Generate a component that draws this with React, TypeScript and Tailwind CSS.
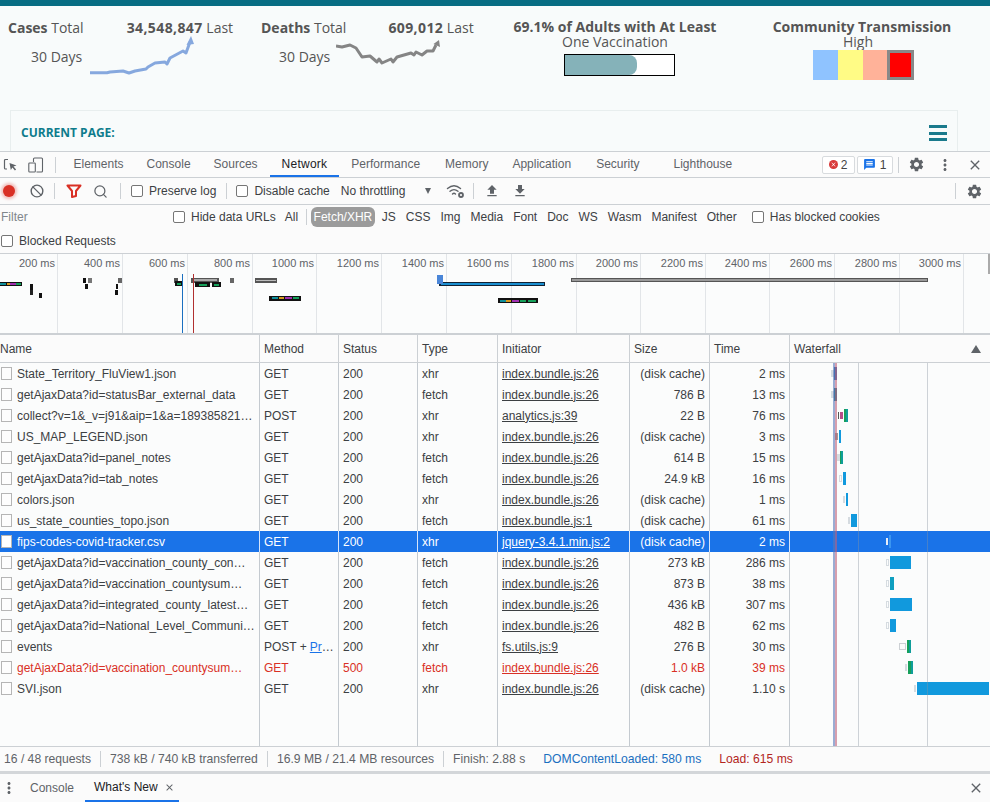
import { Ban, Search } from 'lucide-react';
import { MdClose, MdFileDownload, MdFileUpload, MdMessage, MdMoreVert, MdSettings } from 'react-icons/md';

interface Req {
  name: string;
  method: string;
  status: string;
  type: string;
  initiator: string;
  size: string;
  time: string;
  bars: Bar[];
}

// x0, x1 in page pixels, colour, kind of bar
type Bar = [number, number, string, 'main' | 'light' | 'box'];

const BLUE = '#1199dd';
const TEAL = '#0f9d9a';
const GREEN = '#16a05a';
const LIGHT = '#d5dbe0';

const requests: Req[] = [
  { name: 'State_Territory_FluView1.json', method: 'GET', status: '200', type: 'xhr', initiator: 'index.bundle.js:26', size: '(disk cache)', time: '2 ms', bars: [[831, 834, LIGHT, 'light'], [834, 837, '#2b6cb0', 'main']] },
  { name: 'getAjaxData?id=statusBar_external_data', method: 'GET', status: '200', type: 'fetch', initiator: 'index.bundle.js:26', size: '786 B', time: '13 ms', bars: [[831, 834, LIGHT, 'light'], [834, 837, '#1f7a8c', 'main']] },
  { name: 'collect?v=1&_v=j91&aip=1&a=189385821…', method: 'POST', status: '200', type: 'xhr', initiator: 'analytics.js:39', size: '22 B', time: '76 ms', bars: [[838, 839, '#555', 'light'], [840, 843, '#b54d88', 'light'], [844, 846, GREEN, 'main'], [846, 848, TEAL, 'main']] },
  { name: 'US_MAP_LEGEND.json', method: 'GET', status: '200', type: 'xhr', initiator: 'index.bundle.js:26', size: '(disk cache)', time: '3 ms', bars: [[835, 838, '#9a9a9a', 'light'], [839, 841, BLUE, 'main']] },
  { name: 'getAjaxData?id=panel_notes', method: 'GET', status: '200', type: 'fetch', initiator: 'index.bundle.js:26', size: '614 B', time: '15 ms', bars: [[837, 840, LIGHT, 'light'], [840, 841, GREEN, 'main'], [841, 843, TEAL, 'main']] },
  { name: 'getAjaxData?id=tab_notes', method: 'GET', status: '200', type: 'fetch', initiator: 'index.bundle.js:26', size: '24.9 kB', time: '16 ms', bars: [[839, 842, LIGHT, 'box'], [843, 846, BLUE, 'main']] },
  { name: 'colors.json', method: 'GET', status: '200', type: 'xhr', initiator: 'index.bundle.js:26', size: '(disk cache)', time: '1 ms', bars: [[843, 845, LIGHT, 'light'], [846, 848, BLUE, 'main']] },
  { name: 'us_state_counties_topo.json', method: 'GET', status: '200', type: 'fetch', initiator: 'index.bundle.js:1', size: '(disk cache)', time: '61 ms', bars: [[848, 850, LIGHT, 'light'], [851, 857, BLUE, 'main']] },
  { name: 'fips-codes-covid-tracker.csv', method: 'GET', status: '200', type: 'xhr', initiator: 'jquery-3.4.1.min.js:2', size: '(disk cache)', time: '2 ms', bars: [[886, 888, '#e8eef8', 'light'], [889, 891, '#3b95f0', 'main']] },
  { name: 'getAjaxData?id=vaccination_county_con…', method: 'GET', status: '200', type: 'fetch', initiator: 'index.bundle.js:26', size: '273 kB', time: '286 ms', bars: [[886, 889, LIGHT, 'box'], [890, 911, BLUE, 'main']] },
  { name: 'getAjaxData?id=vaccination_countysum…', method: 'GET', status: '200', type: 'fetch', initiator: 'index.bundle.js:26', size: '873 B', time: '38 ms', bars: [[886, 889, LIGHT, 'box'], [890, 894, '#0f9fc0', 'main']] },
  { name: 'getAjaxData?id=integrated_county_latest…', method: 'GET', status: '200', type: 'fetch', initiator: 'index.bundle.js:26', size: '436 kB', time: '307 ms', bars: [[886, 889, LIGHT, 'box'], [890, 912, BLUE, 'main']] },
  { name: 'getAjaxData?id=National_Level_Communi…', method: 'GET', status: '200', type: 'fetch', initiator: 'index.bundle.js:26', size: '482 B', time: '62 ms', bars: [[886, 889, LIGHT, 'box'], [890, 896, BLUE, 'main']] },
  { name: 'events', method: 'POST', status: '200', type: 'xhr', initiator: 'fs.utils.js:9', size: '276 B', time: '30 ms', bars: [[899, 906, '#ccd0d4', 'box'], [907, 909, GREEN, 'main'], [909, 911, TEAL, 'main']] },
  { name: 'getAjaxData?id=vaccination_countysum…', method: 'GET', status: '500', type: 'fetch', initiator: 'index.bundle.js:26', size: '1.0 kB', time: '39 ms', bars: [[905, 907, LIGHT, 'light'], [908, 911, GREEN, 'main'], [911, 913, TEAL, 'main']] },
  { name: 'SVI.json', method: 'GET', status: '200', type: 'xhr', initiator: 'index.bundle.js:26', size: '(disk cache)', time: '1.10 s', bars: [[914, 916, LIGHT, 'light'], [917, 989, BLUE, 'main']] },
];

const gridCols = 'grid grid-cols-[260px_79px_79px_80px_132px_80px_80px_200px]';
const rulerLabels = [200, 400, 600, 800, 1000, 1200, 1400, 1600, 1800, 2000, 2200, 2400, 2600, 2800, 3000];
const rulerLines = [57, 122, 187, 252, 316, 381, 446, 511, 576, 640, 705, 769, 834, 899, 963];
const filterTypes = ['JS', 'CSS', 'Img', 'Media', 'Font', 'Doc', 'WS', 'Wasm', 'Manifest', 'Other'];

// x, y, width, height, colour: marks on the overview strip
const marks: [number, number, number, number, string][] = [
  [0, 282, 22, 4, '#111'], [0, 283, 6, 2, '#0f8f9a'], [7, 283, 3, 2, '#d69a20'], [10, 283, 6, 2, '#a030b0'], [16, 283, 5, 2, '#16a05a'],
  [30, 284, 3, 6, '#111'], [30, 290, 3, 5, '#222'], [39, 293, 3, 5, '#111'],
  [83, 278, 3, 5, '#111'], [88, 278, 4, 5, '#777'], [85, 284, 3, 5, '#111'],
  [118, 278, 4, 5, '#666'], [116, 284, 2, 5, '#111'], [115, 290, 3, 5, '#111'],
  [174, 278, 4, 5, '#555'], [175, 281, 7, 5, '#111'], [177, 283, 4, 2, '#16a05a'],
  [191, 278, 28, 5, '#555'], [193, 279, 24, 2, '#aaa'], [195, 282, 15, 5, '#111'], [199, 284, 8, 2, '#16a05a'], [212, 282, 9, 5, '#111'], [214, 284, 5, 2, '#16a05a'],
  [230, 278, 4, 5, '#666'],
  [255, 278, 22, 5, '#555'], [256, 280, 20, 1, '#bbb'],
  [269, 296, 32, 5, '#111'], [272, 297, 6, 2, '#0f8f9a'], [279, 297, 5, 2, '#d69a20'], [285, 297, 7, 2, '#a030b0'], [293, 297, 6, 2, '#16a05a'],
  [439, 282, 106, 4, '#123'], [441, 283, 103, 2, '#1a8fd0'], [437, 275, 6, 9, '#4a86d8'],
  [498, 298, 40, 5, '#111'], [500, 300, 6, 2, '#0f8f9a'], [506, 300, 5, 2, '#d69a20'], [512, 300, 7, 2, '#a030b0'], [520, 300, 6, 2, '#16a05a'], [528, 300, 8, 2, '#16a05a'],
  [571, 278, 357, 4, '#555'], [572, 279, 355, 2, '#999'],
];

function Checkbox() {
  return <span className="block w-[12px] h-[12px] shrink-0 rounded-[2px] border border-[#767676] bg-white" />;
}

function Sep({ h = 'h-[16px]' }: { h?: string }) {
  return <span className={`block w-px ${h} bg-[#ccd0d4] shrink-0`} />;
}

function Stat({ label, total, points, head, viewBox, color, width, left, gap }: { label: string; total: string; points: string; head: string; viewBox: string; color: string; width: string; left: string; gap: string }) {
  return (
    <div className={`${width} pl-[8px] shrink-0`}>
      <div className="flex h-[20px] items-center">
        <span><b className="font-bold">{label}</b> Total</span>
        <span className={gap}><b className="font-bold tracking-[0.4px]">{total}</b> Last</span>
      </div>
      <div className={`flex ${left}`}>
        <span className="mt-[10px] leading-[20px]">30 Days</span>
        <svg width="108" height="44" viewBox={viewBox} className="-mt-[5px] ml-[6px]" fill="none">
          <polyline points={points} stroke={color} strokeWidth="3" strokeLinejoin="round" />
          <polygon points={head} fill={color} />
        </svg>
      </div>
    </div>
  );
}

function Tab({ label, active, className }: { label: string; active?: boolean; className?: string }) {
  return (
    <div className={`h-full flex items-center px-[11.5px] border-b-2 ${active ? 'border-[#1a73e8] text-[#202124]' : 'border-transparent text-[#5f6368]'} ${className ?? ''}`}>
      {label}
    </div>
  );
}

function InspectIcon() {
  return (
    <svg width="16" height="16" viewBox="0 0 16 16" fill="none" stroke="#5f6368" strokeWidth="1.2">
      <path d="M6 2.5H3.5a1 1 0 0 0-1 1V11a1 1 0 0 0 1 1H5" />
      <path d="M7.5 6l7 2.6-3 1 2.6 3-1.2 1-2.5-3-1.6 2.4z" fill="#5f6368" stroke="none" />
    </svg>
  );
}

function DeviceIcon() {
  return (
    <svg width="16" height="16" viewBox="0 0 16 16" fill="none" stroke="#5f6368" strokeWidth="1.1">
      <path d="M5.5 5V2a1 1 0 0 1 1-1h7a1 1 0 0 1 1 1v12a1 1 0 0 1-1 1H8.5" />
      <rect x="0.8" y="6" width="6.5" height="9" rx="0.8" />
    </svg>
  );
}

function WifiGear() {
  return (
    <svg width="20" height="16" viewBox="0 0 20 16" fill="none" stroke="#5f6368" strokeWidth="1.4" strokeLinecap="round">
      <path d="M1.5 5.5c4-3.4 9-3.4 13 0" />
      <path d="M4 8.3c2.600-2.200 5.400-2.200 8 0" />
      <path d="M6.500 11c1-.9 2-.9 3 0" />
      <circle cx="15" cy="12" r="2" strokeWidth="1.800" />
    </svg>
  );
}

function Waterfall({ bars }: { bars: Bar[] }) {
  return (
    <>
      {bars.map(([x0, x1, color, kind], i) => {
        const h = kind === 'main' ? 13 : 7;
        return (
          <span
            key={i}
            className="absolute"
            style={{
              left: x0 - 790,
              width: x1 - x0,
              height: h,
              top: (21 - h) / 2,
              background: kind === 'box' ? 'transparent' : color,
              border: kind === 'box' ? `1px solid ${color}` : undefined,
            }}
          />
        );
      })}
    </>
  );
}

export default function App() {
  return (
    <div className="w-[990px] h-[802px] overflow-hidden flex flex-col bg-[#fbfcfc] text-[12px] text-[#3c4043] font-['Liberation_Sans',Arial,sans-serif]">
      {/* page under the devtools */}
      <div className="h-[151px] shrink-0 overflow-hidden bg-[#f8fbfb] font-['Open_Sans',sans-serif] text-[14px] text-[#555]">
        <div className="h-[6px] bg-[#076d83]" />
        <div className="flex pt-[11px] h-[104px]">
          <Stat
            label="Cases"
            total="34,548,847"
            width="w-[253px]"
            left="pl-[23px]"
            gap="ml-[43px]"
            color="#86a8de"
            viewBox="88 32 108 44"
            points="90,72.700 107,72.700 110,72 123,71 129,73 135,71 146,69 148,67 155,63 165,62 167,64 170,58 183,51 186,53 190,42"
            head="191,36 186.500,45 194,44"
          />
          <Stat
            label="Deaths"
            total="609,012"
            width="w-[247px]"
            left="pl-[18px]"
            gap="ml-[42px]"
            color="#858585"
            viewBox="337 32 108 44"
            points="337,46 343,47 351,45 357,48 363,57 371,56 378,62 380,59 383,63 392,59 394,62 398,57 412,53 415,55 417,52 423,55 428,51 434,51 437,45"
            head="440,40 434.500,44 441,47"
          />
          <div className="w-[230px] shrink-0 text-center">
            <div className="font-bold text-[#555] leading-[18px] mt-px">69.1% of Adults with At Least</div>
            <div className="leading-[14px] -mt-px">One Vaccination</div>
            <div className="ml-[64px] mt-[5px] w-[111px] h-[22px] border border-black bg-white">
              <div className="w-[72px] h-full bg-[#85b2b9] rounded-r-[8px]" />
            </div>
          </div>
          <div className="ml-[20px] w-[224px] shrink-0 text-center">
            <div className="font-bold leading-[18px] mt-px">Community Transmission</div>
            <div className="leading-[14px] -mt-px -ml-[8px] h-[14px]">High</div>
            <div className="flex ml-[63px] mt-[1px]">
              <div className="w-[25px] h-[30px] bg-[#8fc3ff]" />
              <div className="w-[25px] h-[30px] bg-[#fffb85]" />
              <div className="w-[24px] h-[30px] bg-[#ffb299]" />
              <div className="w-[27px] h-[30px] bg-[#ff0000] border-[3px] border-[#888]" />
            </div>
          </div>
        </div>
        <div className="mx-[10px] w-[948px] h-[60px] border border-[#e8eeee] flex items-start justify-between pl-[10px] pr-[10px] pt-[14px]">
          <span className="font-bold text-[12px] text-[#0e7c8c] leading-[16px]">CURRENT PAGE:</span>
          <span className="flex flex-col gap-[3.500px] w-[18px]">
            <span className="h-[3px] bg-[#1a7a8c]" />
            <span className="h-[3px] bg-[#1a7a8c]" />
            <span className="h-[3px] bg-[#1a7a8c]" />
          </span>
        </div>
      </div>

      {/* devtools tab bar */}
      <div className="h-[27px] shrink-0 flex items-center border-t border-b border-[#ccd0d4] bg-[#fbfbfb]">
        <span className="ml-[2px]"><InspectIcon /></span>
        <span className="ml-[10px]"><DeviceIcon /></span>
        <span className="ml-[11px]"><Sep h="h-[16px]" /></span>
        <div className="ml-[6px] flex h-full items-center">
          <Tab label="Elements" />
          <Tab label="Console" />
          <Tab label="Sources" />
          <Tab label="Network" active className="ml-px mr-px tracking-[0.25px]" />
          <Tab label="Performance" />
          <Tab label="Memory" className="ml-[2px]" />
          <Tab label="Application" className="ml-px" />
          <Tab label="Security" className="ml-[2px]" />
          <Tab label="Lighthouse" className="ml-[11px]" />
        </div>
        <div className="ml-[78px] flex items-center h-[18px] w-[33px] justify-center gap-[3px] border border-[#d8dbde] rounded-[2px] text-[#444] bg-white">
          <span className="w-[9px] h-[9px] rounded-full bg-[#d93a3a] flex items-center justify-center text-white"><MdClose size={7} /></span>2
        </div>
        <div className="ml-[2px] flex items-center h-[18px] w-[36px] justify-center gap-[4px] border border-[#d8dbde] rounded-[2px] text-[#444] bg-white">
          <MdMessage size={13} color="#1a73e8" />1
        </div>
        <span className="ml-[5px]"><Sep /></span>
        <MdSettings size={17} color="#5f6368" className="ml-[9px]" />
        <MdMoreVert size={18} color="#5f6368" className="ml-[11px]" />
        <MdClose size={16} color="#5f6368" className="ml-[13px]" />
      </div>

      {/* record / filter toolbar */}
      <div className="h-[27px] shrink-0 flex items-center border-b border-[#ccd0d4] bg-[#fbfbfb]">
        <span className="ml-[3px] w-[12px] h-[12px] rounded-full bg-[#d93025] shadow-[0_0_3px_2px_rgba(217,48,37,0.3)]" />
        <Ban size={14} strokeWidth={2.4} color="#5f6368" className="ml-[15px]" />
        <span className="ml-[10px]"><Sep /></span>
        <svg width="16" height="14" viewBox="0 0 16 14" fill="none" stroke="#d93025" strokeWidth="2" className="ml-[11px]">
          <path d="M1.500 1.500h13L10 7v5l-4 1V7z" strokeLinejoin="round" />
        </svg>
        <Search size={15} color="#5f6368" className="ml-[11px]" />
        <span className="ml-[12px]"><Sep /></span>
        <span className="ml-[10px]"><Checkbox /></span>
        <span className="ml-[6px]">Preserve log</span>
        <span className="ml-[10px]"><Sep /></span>
        <span className="ml-[9px]"><Checkbox /></span>
        <span className="ml-[6px]">Disable cache</span>
        <span className="ml-[11px] w-[84px]">No throttling</span>
        <span className="w-0 h-0 border-l-[3.500px] border-r-[3.500px] border-t-[6px] border-l-transparent border-r-transparent border-t-[#5f6368]" />
        <span className="ml-[15px]"><WifiGear /></span>
        <span className="ml-[7px]"><Sep /></span>
        <MdFileUpload size={16} color="#5f6368" className="ml-[10px]" />
        <MdFileDownload size={16} color="#5f6368" className="ml-[12px]" />
        <span className="ml-[427px]"><Sep /></span>
        <MdSettings size={17} color="#5f6368" className="ml-[10px]" />
      </div>

      {/* filter rows */}
      <div className="h-[49px] shrink-0 border-b border-[#ccd0d4] bg-[#fbfbfb]">
        <div className="flex items-center h-[24px]">
          <span className="ml-px w-[172px] text-[#80868b]">Filter</span>
          <Checkbox />
          <span className="ml-[6px]">Hide data URLs</span>
          <span className="ml-[9px]">All</span>
          <span className="ml-[8px]"><Sep /></span>
          <span className="ml-[4px] h-[20px] px-[2.500px] rounded-[6px] bg-[#9b9b9b] text-white flex items-center">Fetch/XHR</span>
          <div className="flex items-center gap-[10px] ml-[7px]">
            {filterTypes.map((t) => (
              <span key={t}>{t}</span>
            ))}
          </div>
          <span className="ml-[15px]"><Checkbox /></span>
          <span className="ml-[6px]">Has blocked cookies</span>
        </div>
        <div className="flex items-center h-[24px]">
          <span className="ml-px"><Checkbox /></span>
          <span className="ml-[6px]">Blocked Requests</span>
        </div>
      </div>

      {/* overview: times and request marks sit on a free strip */}
      <div className="relative h-[81px] shrink-0 border-b-2 border-[#ccd0d4] bg-[#fbfcfc]">
        {rulerLines.map((x) => (
          <span key={x} className="absolute top-0 bottom-0 w-px bg-[#e2e5e8]" style={{ left: x }} />
        ))}
        {rulerLabels.map((ms, i) => (
          <span key={ms} className="absolute top-[2px] text-[11px] leading-[14px] text-[#5f6368] whitespace-nowrap text-right w-[60px]" style={{ left: rulerLines[i] - 62 }}>
            {ms} ms
          </span>
        ))}
        {marks.map(([x, y, w, h, c], i) => (
          <span key={i} className="absolute" style={{ left: x, top: y - 254, width: w, height: h, background: c }} />
        ))}
        <span className="absolute left-[182px] top-[20px] bottom-0 w-px bg-[#1a6fc0]" />
        <span className="absolute left-[193px] top-[20px] bottom-0 w-px bg-[#b03030]" />
        <span className="absolute right-0 top-0 w-[2px] h-[20px] bg-[#aaa]" />
      </div>

      {/* request table */}
      <div className={`${gridCols} h-[28px] shrink-0 border-b border-[#ccd0d4] bg-[#fbfbfb] items-stretch`}>
        {['Name', 'Method', 'Status', 'Type', 'Initiator', 'Size', 'Time'].map((h, i) => (
          <div key={h} className={`flex items-center border-r border-[#ccd0d4] ${i === 0 ? 'pl-0' : 'pl-[4px]'}`}>{h}</div>
        ))}
        <div className="flex items-center justify-between pl-[4px] pr-[9px]">
          Waterfall
          <span className="w-0 h-0 border-l-[5px] border-r-[5px] border-b-[8px] border-l-transparent border-r-transparent border-b-[#5f6368]" />
        </div>
      </div>

      <div className="relative flex-1 flex flex-col min-h-0">
        {requests.map((r, idx) => {
          const selected = idx === 8;
          const failed = r.status === '500';
          const tone = selected ? 'text-white' : failed ? 'text-[#d93025]' : '';
          const line = selected ? 'border-[#d6e4fa]' : 'border-[#c4cad0]';
          return (
            <div key={idx} className={`${gridCols} h-[21px] shrink-0 ${selected ? 'bg-[#1a73e8]' : ''} ${tone}`}>
              <div className={`flex items-center border-r ${line} overflow-hidden`}>
                <span className={`ml-px w-[11px] h-[13px] shrink-0 border border-[#b5b5b5] ${selected ? 'bg-white' : 'bg-[#fdfdfd]'}`} />
                <span className="ml-[5px] whitespace-nowrap">{r.name}</span>
              </div>
              <div className={`flex items-center border-r ${line} pl-[4px] whitespace-nowrap`}>
                {r.name === 'events' ? (
                  <>POST + <span className="ml-[3px] text-[#1a73e8] underline">Pr</span>…</>
                ) : r.method}
              </div>
              <div className={`flex items-center border-r ${line} pl-[4px]`}>{r.status}</div>
              <div className={`flex items-center border-r ${line} pl-[4px]`}>{r.type}</div>
              <div className={`flex items-center border-r ${line} pl-[4px] underline whitespace-nowrap`}>{r.initiator}</div>
              <div className={`flex items-center justify-end border-r ${line} pr-[4px]`}>{r.size}</div>
              <div className={`flex items-center justify-end border-r ${line} pr-[4px]`}>{r.time}</div>
              <div className="relative">
                <Waterfall bars={r.bars} />
              </div>
            </div>
          );
        })}
        <div className={`${gridCols} flex-1`}>
          {[0, 1, 2, 3, 4, 5, 6].map((c) => (
            <div key={c} className="border-r border-[#c4cad0]" />
          ))}
        </div>
        {/* load lines and grid over the waterfall column */}
        <span className="absolute top-0 bottom-0 left-[858px] w-px bg-[#8a93a0]/40 pointer-events-none" />
        <span className="absolute top-0 bottom-0 left-[927px] w-px bg-[#8a93a0]/40 pointer-events-none" />
        <span className="absolute top-0 bottom-0 left-[833px] w-[2px] bg-[#5a76b8]/60 pointer-events-none" />
        <span className="absolute top-0 bottom-0 left-[835px] w-[2px] bg-[#c0607a]/60 pointer-events-none" />
      </div>

      {/* summary bar */}
      <div className="h-[28px] shrink-0 flex items-center border-t border-b-[3px] border-t-[#ccd0d4] border-b-[#d3d6d9] text-[12.15px] text-[#5f6368] bg-[#fbfbfb]">
        <span className="pl-[4px] pr-[9px]">16 / 48 requests</span>
        <Sep />
        <span className="px-[9px]">738 kB / 740 kB transferred</span>
        <Sep />
        <span className="px-[9px]">16.9 MB / 21.4 MB resources</span>
        <Sep />
        <span className="px-[9px]">Finish: 2.88 s</span>
        <span className="px-[9px] text-[#1a6fc0]">DOMContentLoaded: 580 ms</span>
        <span className="px-[9px] text-[#b3261e]">Load: 615 ms</span>
      </div>

      {/* drawer tabs */}
      <div className="h-[28px] shrink-0 flex items-center bg-[#fbfbfb]">
        <MdMoreVert size={18} color="#5f6368" />
        <span className="ml-[12px] text-[#5f6368]">Console</span>
        <div className="ml-[11px] h-full w-[94px] flex items-center pl-[9px] gap-[6px] border-b-2 border-[#1a73e8] text-[#202124]">
          What's New
          <MdClose size={11} color="#5f6368" />
        </div>
        <MdClose size={16} color="#5f6368" className="ml-[789px]" />
      </div>
    </div>
  );
}
